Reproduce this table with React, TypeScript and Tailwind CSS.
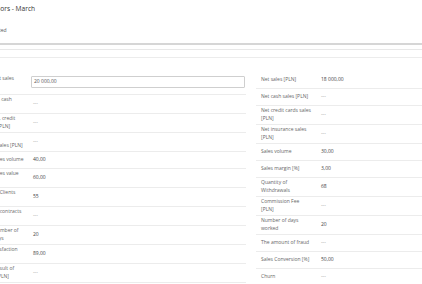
import React from 'react';

type Row = { label: string[]; value: string };

const leftRows: Row[] = [
    { label: ['Net sales in cash', '[PLN]'], value: '---' },
    { label: ['Gross sales, credit', 'card sales [PLN]'], value: '---' },
    { label: ['Gross sales', 'insurance sales [PLN]'], value: '---' },
    { label: ['Planned sales volume'], value: '40,00' },
    { label: ['Planned sales value', '[PLN]'], value: '60,00' },
    { label: ['Number of Clients', '[pcs]'], value: '55' },
    { label: ['Number of contracts', '[pcs]'], value: '---' },
    { label: ['Average Number of', 'working days'], value: '20' },
    { label: ["Clients' satisfaction", '[%]'], value: '89,00' },
    { label: ['Financial result of', 'inventory [PLN]'], value: '---' },
];

const rightRows: Row[] = [
    { label: ['Net sales [PLN]'], value: '18 000,00' },
    { label: ['Net cash sales [PLN]'], value: '---' },
    { label: ['Net credit cards sales', '[PLN]'], value: '---' },
    { label: ['Net insurance sales', '[PLN]'], value: '---' },
    { label: ['Sales volume'], value: '30,00' },
    { label: ['Sales margin [%]'], value: '3,00' },
    { label: ['Quantity of', 'Withdrawals'], value: '68' },
    { label: ['Commission Fee', '[PLN]'], value: '---' },
    { label: ['Number of days', 'worked'], value: '20' },
    { label: ['The amount of fraud'], value: '---' },
    { label: ['Sales Conversion [%]'], value: '50,00' },
    { label: ['Churn'], value: '---' },
];

const KpiRow: React.FC<{ row: Row }> = ({ row }) => (
    <div className="flex items-center min-h-[17px] py-[1.5px] pl-[5px] border-b border-[#ececec]">
        <div className="w-[58px] shrink-0 text-[#666] leading-[7.5px] whitespace-nowrap">
            {row.label.map((line, i) => (
                <div key={i}>{line}</div>
            ))}
        </div>
        <div className={`pl-[2px] leading-[7.5px] ${row.value === '---' ? 'text-[#999]' : 'text-[#444]'}`}>
            {row.value}
        </div>
    </div>
);

export default function App() {
    return (
        <div className="w-[422px] h-[284px] overflow-hidden bg-white font-['Open_Sans',sans-serif] text-[5px]">
            <div className="-ml-[32px] w-[700px]">
                <div className="-ml-[3px] pt-[4px] text-[6.6px] leading-[10px] text-[#333] whitespace-nowrap">
                    KPI of advisors - March
                </div>
                <div className="mt-[13px] leading-[7.5px] text-[#555] whitespace-nowrap">Status: Accepted</div>
                <div className="mt-[8px] h-[2px] bg-[#d6d6d6]" />
                <div className="mt-[4px] h-px bg-[#e8e8e8]" />
                <div className="mt-[7px] h-px bg-[#ececec]" />

                <div className="mt-[13px] grid grid-cols-[278px_278px] gap-x-[10px] items-start">
                    <div>
                        <div className="flex items-center py-[4px] pl-[5px] pr-[1px] border-b border-[#ececec]">
                            <div className="w-[58px] shrink-0 text-[#666] leading-[7.5px] whitespace-nowrap">
                                <div>Planned net sales</div>
                                <div>[PLN]</div>
                            </div>
                            <div className="flex-1 h-[12px] border border-[#cfcfcf] rounded-[1px] px-[2px] flex items-center text-[#555]">
                                20 000,00
                            </div>
                        </div>
                        {leftRows.map((row, i) => (
                            <KpiRow key={i} row={row} />
                        ))}
                    </div>
                    <div className="pt-[1px]">
                        {rightRows.map((row, i) => (
                            <KpiRow key={i} row={row} />
                        ))}
                    </div>
                </div>
            </div>
        </div>
    );
}
